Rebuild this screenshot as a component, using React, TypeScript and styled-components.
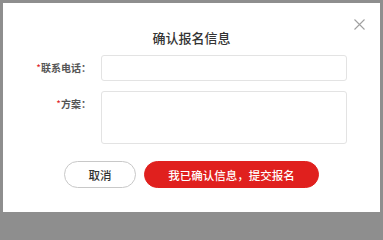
import styled, { createGlobalStyle } from 'styled-components';

const GlobalStyle = createGlobalStyle`
  html, body {
    margin:0;
    padding:0;
    background:#8e8e8e;
  }
  body {
    font-family:"Noto Sans CJK SC", "Noto Sans", sans-serif;
  }
`;

export default function App() {
  return (
    <>
      <GlobalStyle />
      <Overlay>
        <Modal>
          <CloseButton aria-label="关闭">
            <svg width="11" height="11" viewBox="0 0 11 11">
              <path d="M0.5 0.5 L10.5 10.5 M10.5 0.5 L0.5 10.5" stroke="#a0a0a0" strokeWidth="1.1" fill="none" />
            </svg>
          </CloseButton>
          <Title>确认报名信息</Title>
          <Form>
            <Label><Star>*</Star>联系电话：</Label>
            <Input type="text" />
            <Label><Star>*</Star>方案：</Label>
            <TextArea />
          </Form>
          <Actions>
            <Button>取消</Button>
            <Button primary>我已确认信息，提交报名</Button>
          </Actions>
        </Modal>
      </Overlay>
    </>
  );
}

const Overlay = styled.div`
  width:383px;
  height:215px;
  box-sizing:border-box;
  padding:3px;
  display:flex;
`;

const Modal = styled.div`
  position:relative;
  flex:1;
  background:#fff;
  display:flex;
  flex-direction:column;
  align-items:stretch;
  padding-top:26px;
`;

const CloseButton = styled.button`
  position:absolute;
  top:16px;
  right:15px;
  width:11px;
  height:11px;
  padding:0;
  border:0;
  background:none;
  display:flex;
`;

const Title = styled.h3`
  margin:0;
  text-align:center;
  font-size:13px;
  line-height:18px;
  font-weight:500;
  color:#333;
`;

const Form = styled.div`
  margin-top:8px;
  display:grid;
  grid-template-columns:88px 246px;
  column-gap:10px;
  row-gap:10px;
`;

const Label = styled.label`
  text-align:right;
  font-size:10px;
  line-height:26px;
  font-weight:600;
  color:#555;
`;

const Star = styled.span`
  color:#e0201e;
  font-weight:400;
`;

const Input = styled.input`
  box-sizing:border-box;
  height:26px;
  border:1px solid #e3e3e3;
  border-radius:3px;
  outline:none;
`;

const TextArea = styled.textarea`
  box-sizing:border-box;
  height:53px;
  border:1px solid #e3e3e3;
  border-radius:3px;
  resize:none;
  outline:none;
`;

const Actions = styled.div`
  margin-top:17px;
  display:flex;
  justify-content:center;
  gap:8px;
`;

const Button = styled.button<{ primary?: boolean }>`
  height:27px;
  box-sizing:border-box;
  padding:0;
  width:${p => p.primary ? '175px' : '72px'};
  border-radius:14px;
  border:1px solid ${p => p.primary ? '#e0201e' : '#c8c8c8'};
  background:${p => p.primary ? '#e0201e' : '#fff'};
  color:${p => p.primary ? '#fff' : '#333'};
  font-family:"Noto Sans CJK SC", "Noto Sans", sans-serif;
  font-size:11.5px;
  font-weight:500;
`;
